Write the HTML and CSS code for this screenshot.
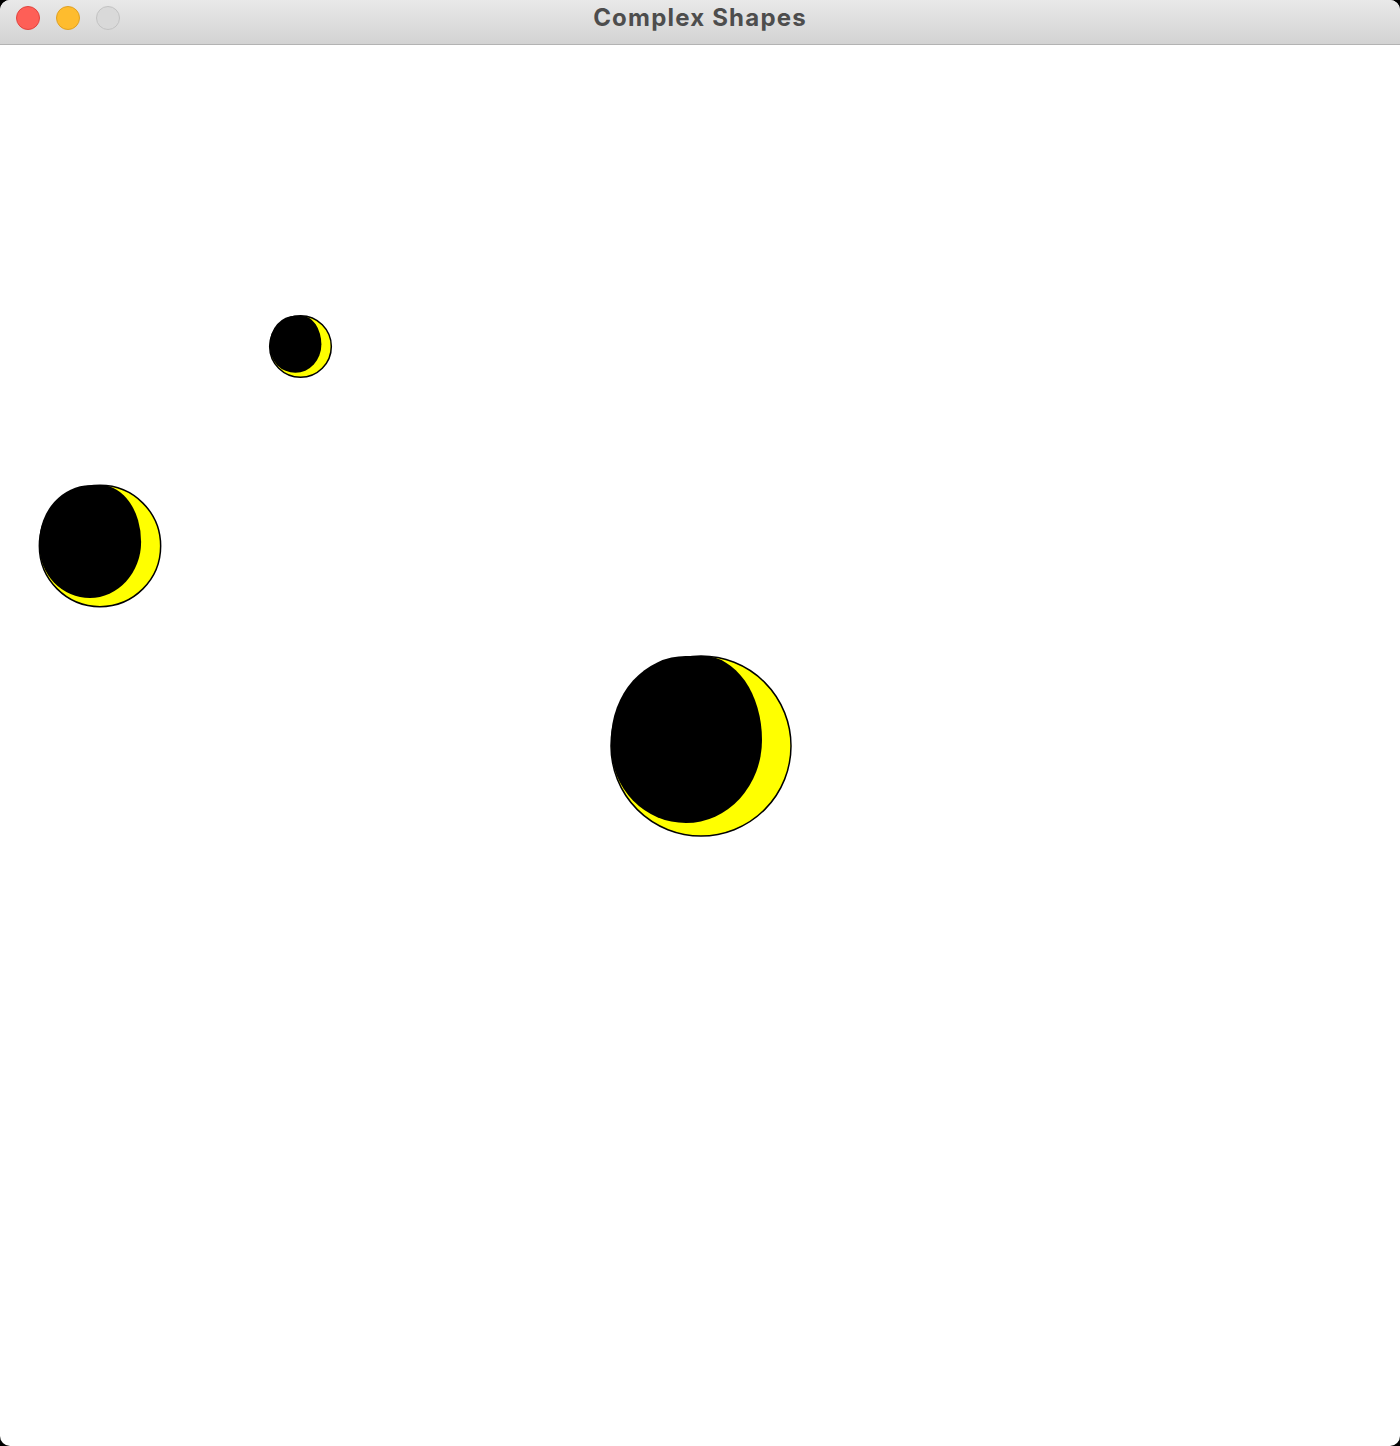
FILE: index.html
```html
<!DOCTYPE html>
<html>
<head>
<meta charset="utf-8">
<link rel="stylesheet" href="styles.css">
</head>
<body>
<div class="window">
  <div class="titlebar">
    <div class="lights">
      <span class="light red"></span>
      <span class="light yellow"></span>
      <span class="light gray"></span>
    </div>
    <div class="title">Complex Shapes</div>
  </div>
  <div class="canvas">
    <svg class="moon moon-small" viewBox="-92 -92 184 184">
      <circle cx="0" cy="0" r="90" fill="#ffff00" stroke="#000" stroke-width="1.5" vector-effect="non-scaling-stroke"/>
      <path d="M 2 -90 L -15 -90 A 75 84 0 0 0 -90 -6 L -90 0 A 75 77 0 0 0 -15 77 A 76 83 0 0 0 61 -6 A 59 84 0 0 0 2 -90 Z" fill="#000"/>
    </svg>
    <svg class="moon moon-medium" viewBox="-92 -92 184 184">
      <circle cx="0" cy="0" r="90" fill="#ffff00" stroke="#000" stroke-width="1.5" vector-effect="non-scaling-stroke"/>
      <path d="M 2 -90 L -15 -90 A 75 84 0 0 0 -90 -6 L -90 0 A 75 77 0 0 0 -15 77 A 76 83 0 0 0 61 -6 A 59 84 0 0 0 2 -90 Z" fill="#000"/>
    </svg>
    <svg class="moon moon-large" viewBox="-92 -92 184 184">
      <circle cx="0" cy="0" r="90" fill="#ffff00" stroke="#000" stroke-width="1.5" vector-effect="non-scaling-stroke"/>
      <path d="M 2 -90 L -15 -90 A 75 84 0 0 0 -90 -6 L -90 0 A 75 77 0 0 0 -15 77 A 76 83 0 0 0 61 -6 A 59 84 0 0 0 2 -90 Z" fill="#000"/>
    </svg>
  </div>
</div>
</body>
</html>
```
FILE: styles.css
```css
html, body {
  margin: 0;
  padding: 0;
  background: #000;
}
.window {
  width: 1400px;
  height: 1446px;
  background: #fff;
  border-radius: 10px;
  overflow: hidden;
  display: flex;
  flex-direction: column;
}
.titlebar {
  height: 44px;
  flex: 0 0 44px;
  background: linear-gradient(#e9e9e9, #d3d3d3);
  border-bottom: 1px solid #b3b3b3;
  position: relative;
  display: flex;
  align-items: center;
  justify-content: center;
}
.lights {
  position: absolute;
  left: 16px;
  top: 6px;
  display: flex;
  gap: 16px;
}
.light {
  width: 22px;
  height: 22px;
  border-radius: 50%;
  border: 1px solid transparent;
}
.red { background: #fe5f57; border-color: #e1443f; }
.yellow { background: #febc2e; border-color: #dfa023; }
.gray { background: #d9d9d9; border-color: #c2c2c2; }
.title {
  font-family: Inter, "Liberation Sans", sans-serif;
  font-weight: 700;
  font-size: 24px;
  letter-spacing: 1.2px;
  color: #4d4d4d;
  margin-top: -9px;
}
.canvas {
  flex: 1;
  position: relative;
}
.moon {
  position: absolute;
  overflow: visible;
}
.moon-small {
  left: 269px;
  top: 270px;
  width: 63px;
  height: 63px;
}
.moon-medium {
  left: 38px;
  top: 439px;
  width: 124px;
  height: 124px;
}
.moon-large {
  left: 609px;
  top: 609px;
  width: 184px;
  height: 184px;
}
```
